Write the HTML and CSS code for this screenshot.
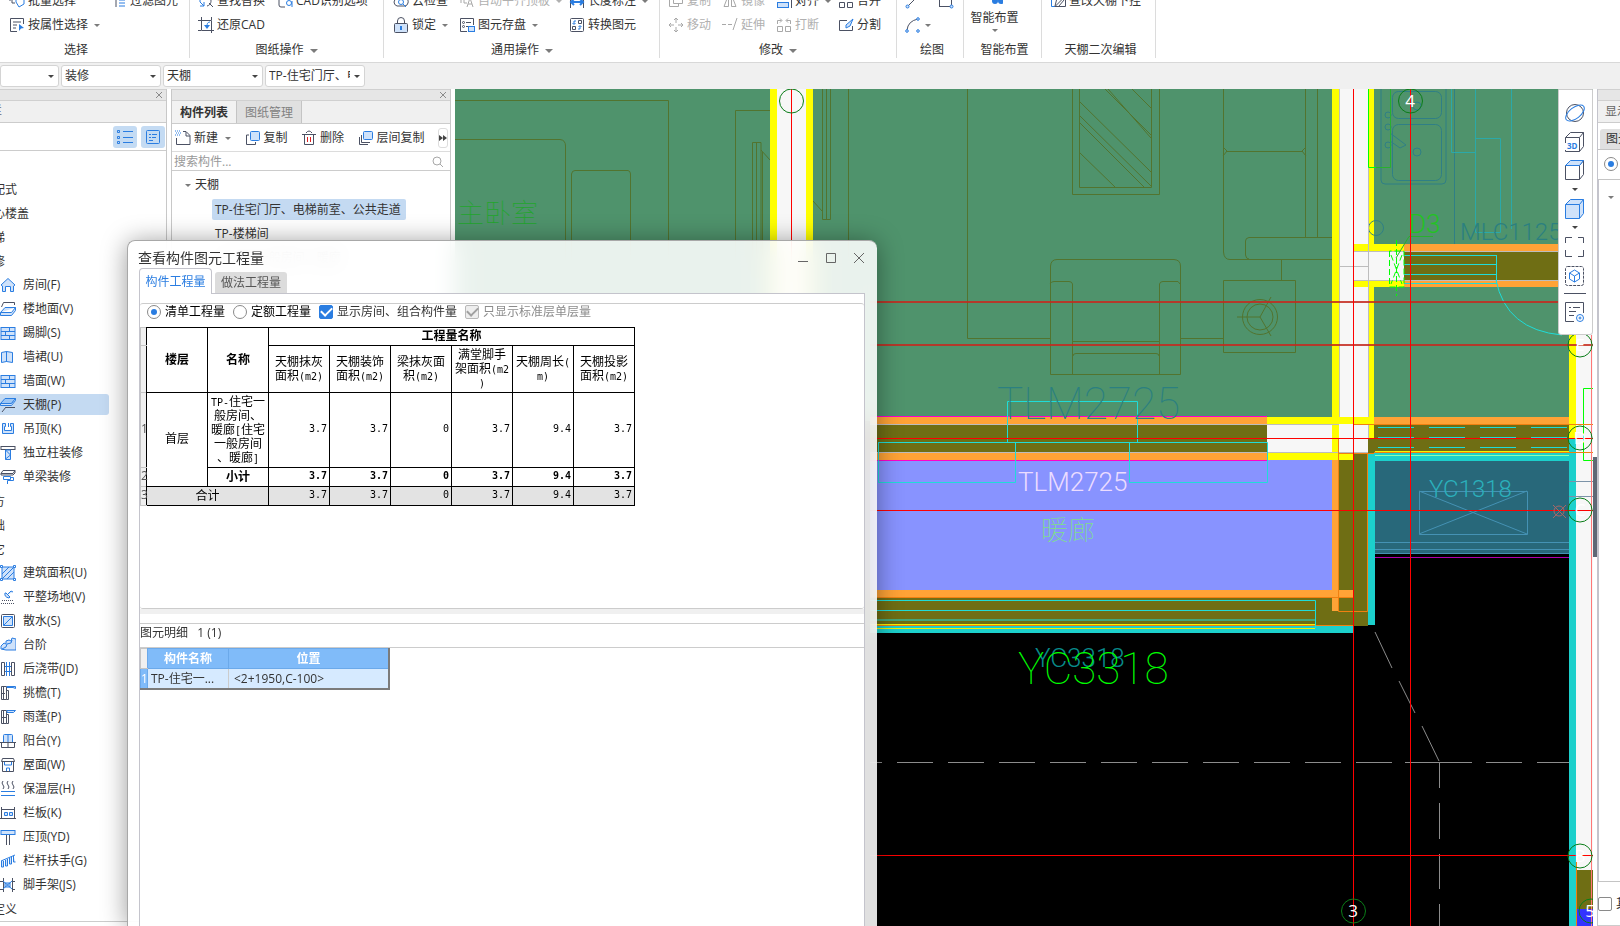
FILE: index.html
```html
<!DOCTYPE html>
<html lang="zh-CN">
<head>
<meta charset="utf-8">
<title>查看构件图元工程量</title>
<link rel="stylesheet" href="styles.css">
</head>
<body>
<div class="app">

<header class="ribbon">
  <section class="group g-select">
    <div class="tools">
      <button class="tool"><svg class="ico" viewBox="0 0 16 16"><path class="d" d="M3 1v9h3M1 3v5"/><path class="b" d="M7 3v6l3 5 5-3 0-6"/></svg>批量选择</button>
      <button class="tool"><svg class="ico" viewBox="0 0 16 16"><path class="d" d="M5 1v13"/><path class="b" d="M8 4h6M8 7h6M8 10h6M8 13h6"/></svg>过滤图元</button>
      <button class="tool"><svg class="ico" viewBox="0 0 16 16"><path class="d" d="M14.500 7V1.500H1.500v13H8M4 5h8M4 8h4M4 11h3"/><path class="bs" d="M10 7l5 4-3 .5-2 2.500z"/></svg>按属性选择<i class="caret"></i></button>
    </div>
    <h2 class="caption">选择</h2>
  </section>
  <section class="group g-drawing">
    <div class="tools">
      <button class="tool"><svg class="ico" viewBox="0 0 16 16"><path class="b" d="M2 5v4l4 4M2 13h4v-4"/><path class="d" d="M9 13c4-1 5-5 3-9M11 10l4 4"/></svg>查找替换</button>
      <button class="tool"><svg class="ico" viewBox="0 0 16 16"><path class="d" d="M2 1v11q0 2 2 2h4M14 1v5"/><circle class="b" cx="12" cy="10" r="2.500"/><path class="b" d="M15 8v6"/></svg>CAD识别选项</button>
      <button class="tool"><svg class="ico" viewBox="0 0 16 16"><path class="d" d="M3.500 0v13.500H16M0 3.500h13.500V16M0 13.500h3M13.500 0v3"/><path class="b" d="M12 5c-3 0-3 3-3 5"/><path class="bs" d="M6 8h6l-3 4z"/></svg>还原CAD</button>
    </div>
    <h2 class="caption">图纸操作<i class="caret"></i></h2>
  </section>
  <section class="group g-common">
    <div class="tools">
      <button class="tool"><svg class="ico" viewBox="0 0 16 16"><path class="d" d="M4 13q-3-1-3-4t4-4q3-4 7 0 4 1 3 5-1 3-3 3z"/><circle class="b" cx="8" cy="9" r="2.500"/><path class="b" d="M10 11l3 3"/></svg>云检查</button>
      <button class="tool off"><svg class="ico" viewBox="0 0 16 16"><path class="m" d="M2 4v6M5 4v6h3M8 14l3-9 3 9M9 11h4"/></svg>自动平齐顶板<i class="caret"></i></button>
      <button class="tool"><svg class="ico" viewBox="0 0 16 16"><path class="d" d="M1.500 2v13M14.500 2v13"/><path class="b2" d="M2 9h12M5 6L2 9l3 3M11 6l3 3-3 3"/></svg>长度标注<i class="caret"></i></button>
      <button class="tool"><svg class="ico" viewBox="0 0 16 16"><path class="d" d="M4.500 6V4a3.500 3.500 0 0 1 7 0v2"/><rect class="d f" x="1.500" y="6.500" width="13" height="9" rx="1"/><path class="b2" d="M8 9v4"/></svg>锁定<i class="caret"></i></button>
      <button class="tool"><svg class="ico" viewBox="0 0 16 16"><path class="d" d="M8 14.500H1.500v-13h13V8M7 5.500h5M7 9.500h2"/><circle class="d" cx="4.500" cy="5.500" r="1"/><circle class="d" cx="4.500" cy="9.500" r="1"/><rect class="b f" x="9.500" y="9.500" width="6" height="5"/></svg>图元存盘<i class="caret"></i></button>
      <button class="tool"><svg class="ico" viewBox="0 0 16 16"><rect class="d" x="1.500" y="1.500" width="13" height="13" rx="1"/><path class="d" d="M9.500 3.500h3v3h-3zM3.500 9.500h3v3h-3z"/><path class="b" d="M7 4H5v3M3.500 6L5 7.500 6.500 6M9 12h2V9M9.500 10L11 8.500 12.500 10"/></svg>转换图元</button>
    </div>
    <h2 class="caption">通用操作<i class="caret"></i></h2>
  </section>
  <section class="group g-modify">
    <div class="tools">
      <button class="tool off"><svg class="ico" viewBox="0 0 16 16"><path class="m" d="M5.500 1h9v9.500h-9zM4 5H1.500v8.500h9V11"/></svg>复制</button>
      <button class="tool off"><svg class="ico" viewBox="0 0 16 16"><path class="m" d="M6.500 2v11.500H2zM9.500 2v11.500H14z"/></svg>镜像</button>
      <button class="tool"><svg class="ico" viewBox="0 0 16 16"><path class="d" d="M15.500 0v15"/><rect class="b f" x="1.500" y="9.500" width="11" height="5"/></svg>对齐<i class="caret"></i></button>
      <button class="tool"><svg class="ico" viewBox="0 0 16 16"><path class="d" d="M1.500 9.500h5v5h-5zM9.500 9.500h5v5h-5zM2 5.500h12"/></svg>合并</button>
      <button class="tool off"><svg class="ico" viewBox="0 0 16 16"><path class="m" d="M8 1v5M8 10v5M1 8h5M10 8h5M6 3l2-2 2 2M6 13l2 2 2-2M3 6L1 8l2 2M13 6l2 2-2 2"/></svg>移动</button>
      <button class="tool off"><svg class="ico" viewBox="0 0 16 16"><path class="m" d="M0 7.500h4M6 7.500h4M11 13l4-12"/></svg>延伸</button>
      <button class="tool off"><svg class="ico" viewBox="0 0 16 16"><path class="m" d="M1.500 9.500h5v5h-5zM9.500 9.500h5v5h-5zM1.500 7V3.500h4M14.500 7V3.500h-4M4 1.500L6 3.500 4 5.500M12 1.500L10 3.500 12 5.500"/></svg>打断</button>
      <button class="tool"><svg class="ico" viewBox="0 0 16 16"><path class="d" d="M9 3.500H1.500v10h13V9"/><path class="b f" d="M15 2l-7 6v3l4-2z"/></svg>分割</button>
    </div>
    <h2 class="caption">修改<i class="caret"></i></h2>
  </section>
  <section class="group g-draw">
    <div class="tools">
      <button class="tool" aria-label="直线"><svg class="ico" viewBox="0 0 16 16"><path class="d" d="M3 13L14 2"/><circle class="b f" cx="2.500" cy="13.500" r="1.500"/></svg></button>
      <button class="tool" aria-label="矩形"><svg class="ico" viewBox="0 0 16 16"><rect class="d" x="1.500" y="2.500" width="12" height="11"/><circle class="b f" cx="13.500" cy="13.500" r="1.500"/></svg></button>
      <button class="tool" aria-label="弧线"><svg class="ico" viewBox="0 0 16 16"><path class="d" d="M2 13Q3 4 13 2"/><circle class="b f" cx="2" cy="14" r="1.300"/><circle class="b f" cx="13" cy="2" r="1.300"/><circle class="b f" cx="13" cy="14" r="1.300"/></svg><i class="caret near"></i></button>
    </div>
    <h2 class="caption">绘图</h2>
  </section>
  <section class="group g-smart">
    <button class="big"><svg class="ico" viewBox="0 0 16 16"><circle class="bs" cx="8" cy="11" r="3"/><circle class="bs" cx="14" cy="11" r="3"/></svg>智能布置<i class="caret"></i></button>
    <h2 class="caption">智能布置</h2>
  </section>
  <section class="group g-edit">
    <div class="tools">
      <button class="tool"><svg class="ico" viewBox="0 0 16 16"><path class="b" d="M4 3.500H1.500v10H5"/><path class="d" d="M5 13.500L15.500 3v10.500zM5 13l2-8M9 13l5-6"/></svg>查改天棚下挂</button>
    </div>
    <h2 class="caption">天棚二次编辑</h2>
  </section>
</header>

<nav class="pickers" aria-label="构件选择">
  <span class="pick first"><select aria-label="楼层"><option></option></select></span>
  <span class="pick"><select aria-label="构件类别"><option>装修</option></select></span>
  <span class="pick"><select aria-label="构件类型"><option>天棚</option></select></span>
  <span class="pick"><select aria-label="构件"><option>TP-住宅门厅、电梯前室、公共走道</option></select></span>
</nav>

<main class="work">
  <aside class="panel nav">
    <div class="grip"><button class="close" aria-label="关闭"><svg viewBox="0 0 8 8"><path d="M1 1l6 6M7 1L1 7"/></svg></button></div>
    <div class="navhead"><span>导航栏</span></div>
    <div class="navtools">
      <button aria-label="列表"><svg class="ico" viewBox="0 0 16 16"><path class="b" d="M6 2.500h10M6 8.500h10M6 13.500h10"/><path class="b" d="M.5 1.500h2v2h-2zM.5 7.500h2v2h-2zM.5 12.500h2v2h-2z"/></svg></button>
      <button aria-label="详情"><svg class="ico" viewBox="0 0 16 16"><rect class="b" x="1.500" y="1.500" width="13" height="13" rx="1"/><path class="b" d="M4 5.500h2M7 5.500h5M4 8.500h2M7 8.500h4M4 11.500h4"/></svg></button>
    </div>
    <ul class="tree">
      <li class="cat">装配式</li>
      <li class="cat">空心楼盖</li>
      <li class="cat">楼梯</li>
      <li class="cat">装修</li>
      <li><svg class="ico" viewBox="0 0 16 16"><path class="b f" d="M1 8l7-6.500L15 8l-1.500 1v5.500h-3v-5h-5v5h-3V9z"/></svg>房间(F)</li>
      <li><svg class="ico" viewBox="0 0 16 16"><path class="d" d="M1.500 6l2-4.500h11V4"/><path class="b f" d="M5 6.500h10.500l-4 5H.5zM.5 11.500v3h11l4-5v-3"/></svg>楼地面(V)</li>
      <li><svg class="ico" viewBox="0 0 16 16"><rect class="b f" x="1" y="2.500" width="14" height="12"/><path class="b" d="M1 6.500h14M1 10.500h14M9.500 2v4M5.500 6v4M9.500 10v4"/></svg>踢脚(S)</li>
      <li><svg class="ico" viewBox="0 0 16 16"><path class="b f" d="M1.500 3.500l5-1v10l-5 1zM6.500 2.500l6 1v10l-6-1z"/></svg>墙裙(U)</li>
      <li><svg class="ico" viewBox="0 0 16 16"><rect class="b f" x="1" y="2.500" width="14" height="12"/><path class="b" d="M1 6.500h14M1 10.500h14M9.500 2v4M5.500 6v4M9.500 10v4"/></svg>墙面(W)</li>
      <li class="on"><svg class="ico" viewBox="0 0 16 16"><path class="b f2" d="M5 1.500h10.500l-4 5H.5z"/><path class="b f" d="M.5 6.500v2h11l4-5v-2l-4 5z"/><path class="d" d="M2 15l4-5M6 10.500h9"/></svg>天棚(P)</li>
      <li><svg class="ico" viewBox="0 0 16 16"><path class="b f" d="M2.500 2.500h3v3h-1v4h7v-4h-1v-3h3v10h-11z"/><path class="b" d="M8.500 2v4"/></svg>吊顶(K)</li>
      <li><svg class="ico" viewBox="0 0 16 16"><rect class="d" x="1" y="1.500" width="14" height="3"/><path class="b f" d="M5.500 5h5v9.500h-5zM5.500 5l5 5-5 4"/></svg>独立柱装修</li>
      <li><svg class="ico" viewBox="0 0 16 16"><path class="d" d="M1 4.500l2-3h12l-2 3zM1 4.500V6h12l2-2V1.500"/><path class="b" d="M3.500 7.500h7v3h-7zM11 8.500h2.500v3h-6V15"/></svg>单梁装修</li>
      <li class="cat">土方</li>
      <li class="cat">基础</li>
      <li class="cat">其它</li>
      <li><svg class="ico" viewBox="0 0 16 16"><rect class="b f" x="2" y="2" width="12" height="12"/><path class="b" d="M2 9l7-7M2 14L14 2M7 14l7-7"/><path class="b w" d="M.5.5h2v2h-2zM13.500.5h2v2h-2zM.5 13.500h2v2h-2zM13.500 13.500h2v2h-2z"/></svg>建筑面积(U)</li>
      <li><svg class="ico" viewBox="0 0 16 16"><path class="b f" d="M5 4q-1 4 4 5l1-1-4-4zM7 6l4-4 2 1"/><path class="d dot" d="M2 11.500h12M1 14.500h14"/></svg>平整场地(V)</li>
      <li><svg class="ico" viewBox="0 0 16 16"><rect class="d" x="1.500" y="1.500" width="13" height="13" rx="1"/><path class="b f" d="M3.500 3.500h9v9h-9zM3.500 12.500l9-9"/></svg>散水(S)</li>
      <li><svg class="ico" viewBox="0 0 16 16"><path class="b f" d="M1 9l3-3 2 1V4l3-1 2 1 1-3 4 1v11H6l-5-1z"/><path class="b" d="M2 12l4-2 1-3 4-1 1-3"/></svg>台阶</li>
      <li><svg class="ico" viewBox="0 0 16 16"><path class="d" d="M1.500 1.500h3v13h-3zM11.500 1.500h3v13h-3z"/><path class="b" d="M6.500 1v14M9.500 1v14M5 5.500h6M5 10.500h6"/></svg>后浇带(JD)</li>
      <li><svg class="ico" viewBox="0 0 16 16"><path class="d" d="M1.500 1.500h5v13h-5zM3.500 1v14M2 8.500h3M6.500 5.500h2v9h-2"/><path class="b f" d="M7 1.500h8.500v2L13 2.500H7z"/></svg>挑檐(T)</li>
      <li><svg class="ico" viewBox="0 0 16 16"><path class="d" d="M1.500 1.500h5v13h-5zM3.500 1v14M2 8.500h5M6.500 5.500h2v9h-2"/><path class="b f" d="M7 1.500h8.500l-2 2H7z"/></svg>雨蓬(P)</li>
      <li><svg class="ico" viewBox="0 0 16 16"><path class="b f" d="M3.500 9V2.500q0-1 1-1h7q1 0 1 1V9M8 1.500V9"/><path class="d" d="M0 9.500h16M1.500 9.500v5h13v-5M8 9.500v5"/></svg>阳台(Y)</li>
      <li><svg class="ico" viewBox="0 0 16 16"><path class="d" d="M2.500 1.500h11l1 3h-13zM2.500 5v9.500h11V5"/><path class="b" d="M4.500 5v3h7V5M6.500 14v-3h3v3"/></svg>屋面(W)</li>
      <li><svg class="ico" viewBox="0 0 16 16"><path class="d" d="M3 0q-2 2 0 4t0 4M8 0q-2 2 0 4t0 4M13 0q-2 2 0 4t0 4"/><path class="b" d="M1 10.500h14M1 14.500h14"/></svg>保温层(H)</li>
      <li><svg class="ico" viewBox="0 0 16 16"><path class="d" d="M1.500 2v11M14.500 2v11M2 4.500h12M0 13.500h16"/><path class="b f" d="M4.500 7.500h3v3h-3zM9.500 7.500h3v3h-3z"/></svg>栏板(K)</li>
      <li><svg class="ico" viewBox="0 0 16 16"><rect class="b f" x="1" y="1.500" width="14" height="4"/><path class="d" d="M6.500 6v10M9.500 6v10"/></svg>压顶(YD)</li>
      <li><svg class="ico" viewBox="0 0 16 16"><path class="b f" d="M1 8l14-6M1.500 8v6h2V8M5.500 7v6h2V6M9.500 5v6h2V4M13.500 3v6h2"/></svg>栏杆扶手(G)</li>
      <li><svg class="ico" viewBox="0 0 16 16"><path class="d" d="M3.500 1v14M12.500 1v14M0 4.500h3M12 4.500h3M0 12.500h3M12 12.500h3"/><path class="b f" d="M3 4l9 8M3 12l9-8M5 6h5v4H5z"/></svg>脚手架(JS)</li>
      <li class="cat">自定义</li>
    </ul>
  </aside>

  <section class="panel comp">
    <div class="grip"><button class="close" aria-label="关闭"><svg viewBox="0 0 8 8"><path d="M1 1l6 6M7 1L1 7"/></svg></button></div>
    <div class="tabs"><button class="tab on">构件列表</button><button class="tab">图纸管理</button></div>
    <div class="comptools">
      <button><svg class="ico" viewBox="0 0 16 16"><path class="d" d="M8 1.500h3l4 4v9H1.500V8M11 2v4h4"/><path class="b dot" d="M0 1h6M1 3h5M0 5h6"/></svg>新建<i class="caret"></i></button>
      <button><svg class="ico" viewBox="0 0 16 16"><path class="d" d="M4 5H1.500v9.500h9V12"/><rect class="b f" x="5.500" y="1.500" width="9" height="9" rx="1"/></svg>复制</button>
      <button><svg class="ico" viewBox="0 0 16 16"><path class="d" d="M5 3q3-4 6 0M1 4.500h14M3.500 4.500v10h9v-10"/><path class="r" d="M6.500 7v5M9.500 7v5"/></svg>删除</button>
      <button><svg class="ico" viewBox="0 0 16 16"><path class="d" d="M1.500 7v7.500H10M3.500 5v7.500H12"/><rect class="b f" x="5.500" y="1.500" width="9" height="8" rx="1"/></svg>层间复制</button>
      <button class="more" aria-label="更多"><svg viewBox="0 0 8 8"><path d="M0 1l4 3-4 3zM4 1l4 3-4 3z"/></svg></button>
    </div>
    <div class="search"><input type="text" placeholder="搜索构件..." aria-label="搜索构件"><svg class="ico" viewBox="0 0 16 16"><circle class="m" cx="7" cy="8" r="4"/><path class="m" d="M10 11l3 3"/></svg></div>
    <ul class="list">
      <li class="root"><i class="caret"></i>天棚</li>
      <li><span class="on">TP-住宅门厅、电梯前室、公共走道</span></li>
      <li><span>TP-楼梯间</span></li>
      <li><span>TP-住宅一般房间、暖廊</span></li>
    </ul>
  </section>

  <section class="canvas" aria-label="绘图区">
    <svg class="cad"><g transform="translate(-455 -89)">
      <rect class="black" x="455" y="89" width="1200" height="1200"/>
      <rect class="green" x="455" y="89" width="1140" height="332"/>
      <g class="furn">
        <path d="M455 100.500H668.500V260M455 139.500H560Q565.500 140 565.500 146V260M571.500 260V174Q572 170.500 575 170.500H628Q630.500 171 630.500 174V260M735.500 260V110.500H778M752.500 260V142.500H761V260M756.500 142V260M761 150L770 160M762.500 152V260"/>
        <path d="M813 201L822 211M822.500 89V219.500H830.500V89M826.500 89V219M848.500 89V300M967.500 89V338.500H1050M1181 338.500H1223"/>
        <path d="M1072.500 89V194.500H1159.500V89M1079.500 89V187.500H1151.500V89M1105 89L1151 135M1108 89L1151 138M1132 89L1151 108M1079 101L1151 172M1079 115L1151 186M1079 122L1144 187M1079 152L1115 187"/>
        <path d="M1223.500 89V252Q1224 259.500 1230 259.500H1339M1305.500 89V237M1317.500 89V237M1226 151.500H1303M1339 237.500H1249Q1245.500 238 1245.500 241V255Q1246 259 1249 259M1223 147L1227 151 1223 156M1306 147L1302 151 1306 156M1281.500 259V280"/>
        <path d="M1223.500 280.500H1295.500V352.500H1223.500zM1237 317H1260L1271 297M1260 317L1271 336"/><circle cx="1260" cy="317" r="17.500"/><circle cx="1260" cy="317" r="13"/>
        <path d="M1050.500 374.500V266Q1051 259.500 1057 259.500H1174Q1180.500 260 1180.500 266V374.500zM1050 284Q1051 281.500 1054 281.500H1069Q1072 281.500 1072.500 284V374M1159.500 374V284Q1160 281.500 1163 281.500H1178L1180 284M1073 341.500H1159M1073 356Q1073 353.500 1076 353.500H1156Q1159 353.500 1159 356"/>
      </g>
      <g class="kitchen">
        <rect x="1381" y="80" width="65" height="104" rx="4"/><rect x="1392.500" y="91.500" width="49" height="27" rx="6"/><rect x="1392.500" y="124.500" width="49" height="56" rx="6"/>
        <circle cx="1388" cy="115" r="3"/><circle cx="1388" cy="127" r="3"/><circle cx="1388" cy="145" r="3"/><circle cx="1417" cy="152" r="4"/><circle cx="1417" cy="106" r="4"/>
        <path d="M1390 133L1406 145 1400 148 1390 141M1454.500 89V251"/>
        <path class="aqua" d="M1451.500 89V152.500H1475M1475.500 89V232.500H1500.500V138.500H1475M1511.500 89V229"/>
      </g>
      <rect class="white" x="777" y="89" width="29" height="300"/><rect class="yellow" x="770" y="89" width="7" height="300"/><rect class="yellow" x="806" y="89" width="7" height="300"/>
      <path class="red" d="M791.500 89V300"/><circle class="mark" cx="791.500" cy="101" r="12"/>
      <rect class="white" x="1339" y="89" width="29" height="364"/>
      <rect class="yellow" x="1332" y="89" width="7" height="371"/><rect class="yellow" x="1368" y="89" width="6" height="349"/>
      <rect class="yellow" x="1353" y="244" width="51" height="43"/><rect class="white" x="1353" y="251" width="51" height="29"/>
      <rect class="orange" x="1404" y="244" width="189" height="43"/><rect class="olive" x="1404" y="251" width="189" height="29"/>
      <circle class="kitchen" cx="1376" cy="228" r="7.500"/>
      <path class="grey" d="M1353 251.500H1593M1353 280.500H1593M1339 266.500H1368M1339.500 89V453M1368.500 89V438"/>
      <path class="cyanline" d="M1404 255.500H1496M1404 264.500H1496M1404 274.500H1496M1404 283.500H1496M1496.500 255V284M1496 280Q1506 330 1562 335"/>
      <path class="lime" d="M1368.500 89V167.500H1376"/><path class="leader" d="M1376 167.500H1390.500V89"/>
      <path class="lime dash" d="M1389.500 251V287H1404V251zM1391 255L1402 284M1402 255L1391 284M1396.500 240V296"/>
      <path class="leader" d="M1396 258L1409 236.500H1433"/>

      <rect class="orange" x="870" y="417" width="397" height="43"/><rect class="olive" x="870" y="425" width="397" height="28"/>
      <rect class="yellow" x="1267" y="417" width="107" height="7"/><rect class="white" x="1267" y="424" width="65" height="29"/><rect class="white" x="1339" y="424" width="29" height="29"/><rect class="yellow" x="1267" y="453" width="86" height="7"/>
      <rect class="blue" x="870" y="460" width="463" height="130"/>
      <rect class="olive" x="870" y="597" width="498" height="29"/><rect class="olive" x="1339" y="453" width="29" height="173"/><rect class="olive" x="1368" y="438" width="7" height="15"/>
      <rect class="yellow" x="1332" y="453" width="21" height="7"/>
      <rect class="orange" x="1332" y="460" width="7" height="151"/><rect class="orange" x="870" y="590" width="483" height="7"/>
      <rect class="cyan" x="870" y="626" width="483" height="7"/><rect class="cyan" x="1368" y="453" width="7" height="172"/>
      <path class="magenta" d="M870 416.500H1267M870 460.500H1267"/><path class="grey" d="M870 424.500H1339M870 452.500H1368"/>
      <path class="amber" d="M1338.500 439V611.500H1367.500V453M1339 453.500H1374M870 597.500H1353M870 625.500H1353"/>
      <path class="cyanline" d="M1007.500 442V401.500H1137.500V442M878 442.500H1267.500V482.500H1129.500V442M1015.500 442V482.500H878.500V442M870 600.500H1315.500V628M870 610.500H1315M870 620H1315"/>
      <path class="yline" d="M870 624.500H1315M870 628.500H1315"/>

      <rect class="orange" x="1374" y="417" width="195" height="7"/><rect class="olive" x="1374" y="424" width="195" height="29"/><rect class="cyan" x="1374" y="453" width="195" height="8"/>
      <path class="cyanline long" d="M1378 427.500H1569M1378 437.500H1569M1378 447.500H1569"/><path class="yline" d="M1375 451.500H1569"/><path class="pale" d="M1375 455.500H1569"/>
      <rect class="teal" x="1375" y="461" width="194" height="93"/>
      <path class="steel" d="M1419.500 491.500H1527.500V534.500H1419.500zM1419 491L1527 534M1419 534L1527 491M1375 542.500H1569M1375 549.500H1569M1375 553.500H1569"/>
      <path class="purple" d="M1375 557.500H1569"/>
      <rect class="yellow" x="1569" y="300" width="7" height="138"/><rect class="cyan" x="1569" y="438" width="7" height="900"/><rect class="white" x="1576" y="287" width="17" height="583"/>
      <rect class="olive" x="1576" y="870" width="17" height="39"/><rect class="navy" x="1576" y="909" width="17" height="300"/>
      <path class="lime" d="M1593 388.500H1583.500V460.500H1593"/><path class="slate" d="M1593 481.500H1569M1593 496.500H1569"/>
      <path class="amber" d="M1354 424.500H1593M1374 452.500H1593M1576.500 860V926"/>
      <g class="haze">
        <path d="M1375 632L1392 668M1399 681L1415 713M1422 726L1439 761M1405 762.500H1472M1486 762.500H1522M1537 762.500H1569M1356 762.500H1392M1305 762.500H1341M1254 762.500H1290M1203 762.500H1239M1152 762.500H1188M1101 762.500H1137M1050 762.500H1086M999 762.500H1035M948 762.500H984M897 762.500H933M870 762.500H882M1439.500 763V788M1439.500 803V839M1439.500 854V889M1439.500 904V940"/>
      </g>
      <path class="red thick" d="M870 302H1559M870 345H1593"/>
      <path class="red" d="M870 438.500H1593M870 510.500H1593M870 855.500H1593M1353.500 89V926M1410.500 89V926"/>
      <path class="pink" d="M1591.500 335V926"/><path class="pinkmark" d="M1553 505L1566 518M1566 505L1553 518"/><circle class="pinkmark" cx="1559" cy="511" r="5"/>
      <g class="mark"><circle cx="1410.500" cy="101" r="12"/><circle cx="1580" cy="345" r="12"/><circle cx="1580" cy="438" r="12"/><circle cx="1580" cy="510" r="12"/><circle cx="1580" cy="856" r="12"/><circle cx="1353.500" cy="911" r="12"/><circle cx="1591" cy="911" r="12"/></g>
      <g class="axis"><text x="1410" y="107">4</text><text x="1580" y="351">E</text><text x="1580" y="444">D</text><text x="1580" y="516">C</text><text x="1580" y="862">B</text><text x="1353" y="917">3</text><text x="1590" y="917">5</text></g>
      <g class="cadtext">
        <text class="t-green han" x="457" y="223">主卧室</text>
        <text class="t-teal big" x="997" y="419">TLM2725</text>
        <text class="t-teal slim" x="1460" y="240">MLC1125</text>
        <text class="t-lime" x="1409" y="233">D3</text>
        <text class="t-lilac" x="1018" y="491">TLM2725</text>
        <text class="t-mint han" x="1041" y="540">暖廊</text>
        <text class="t-deep" x="1035" y="667">YC3318</text>
        <text class="t-bright big" x="1018" y="684">YC3318</text>
        <text class="t-aqua slim" x="1429" y="497">YC1318</text>
      </g>
    </g></svg>
    <div class="viewbar">
      <button aria-label="动态观察"><svg class="vico" viewBox="0 0 22 22"><circle class="d" cx="11" cy="11" r="8.500"/><ellipse class="b" cx="11" cy="11" rx="11" ry="5.500" transform="rotate(-38 11 11)"/></svg></button>
      <button aria-label="三维"><svg class="vico" viewBox="0 0 22 22"><path class="d" d="M1.500 12V6.500l5-5h13v14l-4 5H1.500V19M1.500 6.500h14v14M15.500 6.500l4-5"/><text class="v3d" x="3" y="18">3D</text></svg></button>
      <button aria-label="俯视"><svg class="vico" viewBox="0 0 22 22"><path class="d" d="M1.500 6.500v14h14l4-5v-14l-4 5zM15.500 6.500v14"/><path class="b f" d="M1.500 6.500l5-5h13l-4 5z"/></svg></button>
      <i class="caret"></i>
      <button aria-label="着色"><svg class="vico" viewBox="0 0 22 22"><path class="b f" d="M1.500 6.500l5-5h13v14l-4 5H1.500zM1.500 6.500h14v14M15.500 6.500l4-5"/></svg></button>
      <i class="caret"></i>
      <button aria-label="全屏"><svg class="vico" viewBox="0 0 22 22"><path class="d" d="M1.500 7V1.500H8M14 1.500h5.500V7M19.500 14v6.500H14M8 20.500H1.500V14"/></svg></button>
      <button aria-label="局部三维"><svg class="vico" viewBox="0 0 22 22"><rect class="d dsh" x="1.500" y="1.500" width="18" height="19" rx="2"/><path class="b" d="M10.500 5l5 3v6l-5 3-5-3V8zM5.500 8l5 3 5-3M10.500 11v6"/></svg></button>
      <hr>
      <button aria-label="显示设置"><svg class="vico" viewBox="0 0 22 22"><path class="d" d="M10 20.500H1.500v-19h18V12M5 6.500h2M9 6.500h7M5 10.500h7M5 14.500h5"/><circle class="b" cx="16" cy="17" r="3.500"/><circle class="b" cx="16" cy="17" r="1"/></svg></button>
    </div>
  </section>

  <div class="splitter"><i></i></div>

  <aside class="panel props">
    <div class="grip"></div>
    <div class="propshead">显示设置</div>
    <div class="propstabs"><button>图元显示</button></div>
    <div class="propsradio"><input type="radio" name="scope" checked aria-label="显示范围"></div>
    <div class="propsbody"><i class="caret"></i></div>
    <div class="propsfoot"><input type="checkbox" id="other"><label for="other">其他</label></div>
  </aside>
</main>

<section class="dialog" role="dialog" aria-labelledby="dlg-title">
  <div class="titlebar">
    <h1 id="dlg-title">查看构件图元工程量</h1>
    <div class="winbtns">
      <button aria-label="最小化"><svg viewBox="0 0 12 12"><path d="M1 9.500h10"/></svg></button>
      <button aria-label="最大化"><svg viewBox="0 0 12 12"><path d="M1.500 1.500h9v9h-9z"/></svg></button>
      <button aria-label="关闭"><svg viewBox="0 0 12 12"><path d="M1 1l10 10M11 1L1 11"/></svg></button>
    </div>
  </div>
  <div class="dlgtabs"><button class="on">构件工程量</button><button>做法工程量</button></div>
  <div class="sheet">
    <div class="upper">
      <div class="opts">
        <label class="strong"><input type="radio" name="kind" checked>清单工程量</label>
        <label class="strong"><input type="radio" name="kind">定额工程量</label>
        <label><input type="checkbox" checked>显示房间、组合构件量</label>
        <label class="off"><input type="checkbox" checked disabled>只显示标准层单层量</label>
      </div>
      <table class="qty">
        <tr class="r-top"><th class="no"></th><th rowspan="2">楼层</th><th rowspan="2">名称</th><th colspan="6">工程量名称</th></tr>
        <tr class="r-head"><th class="no"></th><td>天棚抹灰<br>面积<span>(m2)</span></td><td>天棚装饰<br>面积<span>(m2)</span></td><td>梁抹灰面<br>积<span>(m2)</span></td><td>满堂脚手<br>架面积<span>(m2</span><br><span>)</span></td><td>天棚周长<span>(</span><br><span>m)</span></td><td>天棚投影<br>面积<span>(m2)</span></td></tr>
        <tr class="r-body"><th class="no">1</th><td rowspan="2">首层</td><td><span>TP-</span>住宅一<br>般房间、<br>暖廊<span>[</span>住宅<br>一般房间<br>、暖廊<span>]</span></td><td class="n">3.7</td><td class="n">3.7</td><td class="n">0</td><td class="n">3.7</td><td class="n">9.4</td><td class="n">3.7</td></tr>
        <tr class="r-sum"><th class="no">2</th><th>小计</th><th class="n">3.7</th><th class="n">3.7</th><th class="n">0</th><th class="n">3.7</th><th class="n">9.4</th><th class="n">3.7</th></tr>
        <tr class="r-sum total"><th class="no">3</th><td colspan="2">合计</td><td class="n">3.7</td><td class="n">3.7</td><td class="n">0</td><td class="n">3.7</td><td class="n">9.4</td><td class="n">3.7</td></tr>
      </table>
    </div>
    <div class="divider"></div>
    <div class="lower">
      <h2>图元明细&nbsp;&nbsp; 1 (1)</h2>
      <table class="detail">
        <tr><th class="no"></th><th class="c1">构件名称</th><th class="c2">位置</th></tr>
        <tr><th class="no cur">1</th><td>TP-住宅一...</td><td>&lt;2+1950,C-100&gt;</td></tr>
      </table>
    </div>
  </div>
</section>
</div>
</body>
</html>
```

FILE: styles.css
```css
* { box-sizing: border-box; }
body { margin: 0; font: 12px/16px "Open Sans", "Noto Sans CJK SC", sans-serif; color: #333; background: #fff; overflow: hidden; }
button { font: inherit; color: inherit; background: none; border: 0; padding: 0; margin: 0; }
h1, h2 { margin: 0; font-weight: 400; font-size: 12px; }
ul { list-style: none; margin: 0; padding: 0; }
.app { position: relative; height: 100vh; display: flex; flex-direction: column; overflow: hidden; }

.ico { width: 16px; height: 16px; flex: none; }
.d, .b, .b2, .m, .r { fill: none; stroke-width: 1; }
.d { stroke: #4b5163; }
.b, .b2 { stroke: #2a7de1; }
.b2 { stroke-width: 2; }
.m { stroke: #a8a8a8; }
.r { stroke: #e02020; }
.bs { fill: #2a7de1; }
.f { fill: #cfe2fa; }
.f2 { fill: #9cc6f5; }
.w { fill: #fff; }
.dot { stroke-dasharray: 1 1; }
.dsh { stroke-dasharray: 3 1; }
.caret { display: inline-block; flex: none; width: 0; height: 0; border: 4px solid transparent; border-top: 4px solid #7b7b7b; border-bottom: 0; margin-left: 6px; }

.ribbon { height: 63px; flex: none; display: flex; background: #fff; border-bottom: 1px solid #d8d8d8; overflow: hidden; }
.group { flex: none; display: flex; flex-direction: column; justify-content: flex-end; align-items: stretch; height: 58px; position: relative; border-right: 1px solid #dcdcdc; }
.tools { display: grid; grid-auto-rows: 24px; align-items: center; padding-bottom: 5px; }
.tool { display: flex; align-items: center; gap: 3px; white-space: nowrap; }
.tool .caret { margin-left: 3px; border-width: 3px; border-bottom: 0; }
.tool .near { margin-left: 1px; }
.off { color: #b0b0b0; }
.off .caret { border-top-color: #b0b0b0; }
.caption { text-align: center; height: 16px; white-space: nowrap; padding-right: 8px; }
.caption .caret { vertical-align: middle; }
.g-select { width: 190px; padding-left: 9px; }
.g-select .tools { grid-template-columns: 102px auto; }
.g-select .caption { padding-right: 46px; }
.g-drawing { width: 194px; padding-left: 8px; }
.g-drawing .tools { grid-template-columns: 79px auto; }
.g-common { width: 276px; padding-left: 9px; }
.g-common .tools { grid-template-columns: 66px 110px auto; }
.g-modify { width: 237px; padding-left: 8px; }
.g-modify .tools { grid-template-columns: 54px 54px 62px auto; }
.g-draw { width: 67px; padding-left: 8px; }
.g-draw .tools { grid-template-columns: 33px auto; }
.g-draw .caption { padding-right: 4px; }
.g-smart { width: 78px; }
.g-smart .big { display: flex; flex-direction: column; align-items: center; gap: 4px; padding-right: 16px; padding-bottom: 10px; line-height: 15px; }
.g-smart .big .caret { margin: 0; border-width: 3px; border-bottom: 0; }
.g-smart .caption { padding: 0 0 0 4px; }
.g-edit { width: 114px; padding-left: 8px; }
.g-edit .tools { padding-bottom: 29px; }
.g-edit .caption { padding-right: 4px; }

.pickers { height: 26px; flex: none; display: flex; gap: 2px; align-items: center; background: #f0f0f0; }
.pick { position: relative; width: 100px; height: 22px; }
.pick.first { width: 59px; }
.pick select { appearance: none; width: 100%; height: 22px; border: 1px solid #d4d4d4; border-radius: 3px; background: #fff; padding: 0 14px 0 3px; font: inherit; color: #333; overflow: hidden; }
.pick::after { content: ""; position: absolute; right: 5px; top: 10px; border: 3px solid transparent; border-top: 3px solid #444; border-bottom: 0; }

.work { flex: 1; min-height: 0; display: flex; }
.panel { display: flex; flex-direction: column; background: #fff; border-right: 1px solid #c8c8c8; overflow: hidden; flex: none; }
.grip { height: 12px; flex: none; background: #e6e6e6; border-top: 1px solid #d0d0d0; border-bottom: 1px solid #d0d0d0; display: flex; justify-content: flex-end; align-items: center; }
.close { width: 8px; height: 8px; margin-right: 3px; }
.close svg { display: block; width: 8px; height: 8px; stroke: #8a8a8a; fill: none; }

.nav { width: 167px; margin-right: 4px; }
.navhead { height: 22px; flex: none; background: #f0f0f0; border-bottom: 1px solid #ccc; color: #667; line-height: 20px; display: flex; }
.navhead span { margin-left: -34px; }
.navtools { height: 28px; flex: none; border-bottom: 1px solid #ccc; display: flex; justify-content: flex-end; align-items: center; gap: 4px; padding-right: 1px; }
.navtools button { width: 24px; height: 22px; border-radius: 3px; background: #c4dbf3; display: flex; align-items: center; justify-content: center; }
.tree { padding-top: 26px; border-bottom: 1px solid #ccc; }
.tree li { height: 24px; display: flex; align-items: center; gap: 7px; white-space: nowrap; }
.tree .cat { margin-left: -19px; padding-top: 1px; }
.tree .on { height: 21px; margin: 1px 57px 2px 0; background: #c4daf2; border-radius: 0 3px 3px 0; }

.comp { width: 280px; border-left: 1px solid #c8c8c8; margin-right: 4px; }
.tabs { height: 23px; flex: none; display: flex; background: #f0f0f0; border-bottom: 1px solid #ccc; }
.tab { width: 65px; border-right: 1px solid #c4c4c4; background: #e0e0e0; color: #808080; padding-top: 2px; }
.tab.on { background: #f2f2f2; color: #333; font-weight: 700; }
.comptools { height: 28px; flex: none; border-bottom: 1px solid #dcdcdc; display: flex; align-items: center; justify-content: space-between; padding: 1px 2px 0 3px; }
.comptools button { display: flex; align-items: center; gap: 3px; white-space: nowrap; }
.comptools .caret { margin-left: 4px; border-width: 3px; border-bottom: 0; }
.comptools .more { width: 10px; height: 20px; border: 1px solid #ddd; border-radius: 3px; justify-content: center; }
.more svg { width: 8px; height: 8px; fill: #444; flex: none; }
.search { height: 19px; flex: none; border-bottom: 1px solid #ccc; display: flex; align-items: center; padding: 0 4px 0 2px; }
.search input { flex: 1; min-width: 0; border: 0; padding: 1px 0 0; font: inherit; outline: 0; }
.search input::placeholder { color: #999; opacity: 1; }
.list { padding-top: 2px; }
.list li { height: 24px; display: flex; align-items: center; padding-left: 40px; white-space: nowrap; }
.list .root { padding-left: 13px; gap: 3px; }
.list .root .caret { margin: 0 1px 0 0; border-width: 3px; border-bottom: 0; }
.list span { height: 21px; line-height: 21px; padding: 0 5px 0 3px; border-radius: 2px; }
.list .on { background: #c4daf2; }

.canvas { flex: 1; min-width: 0; position: relative; background: #000; overflow: hidden; }
.cad { display: block; width: 100%; height: 100%; }
.cad path, .kitchen, .furn, .mark { fill: none; }
.black { fill: #000; } .green { fill: #4f936c; } .white { fill: #f7f7f7; } .yellow { fill: #ff0; }
.orange { fill: #ffa336; } .olive { fill: #6f6e14; } .blue { fill: #8893ff; } .cyan { fill: #1cd0cc; }
.teal { fill: #28687a; } .navy { fill: #33f; }
.furn { stroke: #52742f; }
.kitchen { stroke: #2f7f86; } .aqua { stroke: #2ba9a9; }
.red { stroke: #f00; } .cad .thick { stroke: #c4291f; stroke-width: 2; opacity: .85; }
.grey { stroke: #bdbdbd; } .cyanline { stroke: #1fdcd8; } .long { stroke-dasharray: 36 15; }
.lime { stroke: #0f0; } .dash { stroke-dasharray: 6 3; } .leader { stroke: #28b02e; }
.magenta { stroke: #f0c; } .purple { stroke: #b000b0; } .amber { stroke: #f08010; } .yline { stroke: #f4f400; } .pale { stroke: #8dffb0; }
.steel { stroke: #4592b4; } .slate { stroke: #7c93a8; } .haze { stroke: #8c8c8c; }
.pink { stroke: #f77; } .pinkmark { fill: none; stroke: #a66; }
.mark { stroke: #0a7d18; }
.axis text { font: 17px "Open Sans", sans-serif; fill: #fff; text-anchor: middle; }
.cadtext text { font: 300 26px Roboto, "Noto Sans CJK SC", sans-serif; }
.cadtext .slim { font-size: 24px; }
.cadtext .big { font-size: 44px; font-weight: 100; }
.cadtext .han { font-size: 27px; font-weight: 100; }
.t-green { fill: #22a52c; } .t-teal { fill: #2b8080; } .t-lime { fill: #22c322; } .t-lilac { fill: #ecdcff; }
.t-mint { fill: #7fe08a; } .t-deep { fill: #088a8a; } .t-bright { fill: #0f0; } .t-aqua { fill: #2bb0bc; }

.viewbar { position: absolute; top: 0; right: 0; width: 35px; height: 246px; background: #fff; border: 1px solid #ccc; border-radius: 0 0 3px 3px; display: flex; flex-direction: column; align-items: center; justify-content: space-between; padding: 12px 2px 11px 0; }
.viewbar button { height: 22px; }
.vico { width: 22px; height: 22px; display: block; }
.v3d { font: 700 8px "Open Sans", sans-serif; fill: #2a7de1; }
.viewbar .caret { margin: 0; border-width: 3px; border-top-color: #444; border-bottom: 0; }
.viewbar hr { width: 22px; margin: 0; border: 0; border-top: 1px solid #4b5163; }

.splitter { width: 4px; flex: none; background: #fff; display: flex; flex-direction: column; }
.splitter i { margin-top: 368px; height: 100px; background: #5f6875; }

.props { width: 23px; border-right: 0; border-left: 1px solid #c4c4cc; white-space: nowrap; }
.propshead { height: 22px; flex: none; background: #f0f0f0; border-bottom: 1px solid #ccc; padding-left: 7px; line-height: 22px; color: #666; }
.propstabs { height: 27px; flex: none; border-bottom: 1px solid #c4c4c4; padding: 6px 0 0 2px; }
.propstabs button { height: 20px; background: #e0e0e0; padding-left: 6px; border-radius: 3px 0 0 0; }
.propsradio { height: 30px; flex: none; border-bottom: 1px solid #c4c4c4; padding: 7px 0 0 6px; }
.propsbody { flex: 1; border-left: 1px solid #c4c4cc; padding: 13px 0 0 9px; line-height: 4px; }
.propsbody .caret { margin: 0; border-width: 3px; border-bottom: 0; }
.propsfoot { height: 45px; flex: none; border-top: 1px solid #c4c4c4; border-bottom: 1px solid #ccc; display: flex; align-items: center; gap: 4px; }

input[type=radio], input[type=checkbox] { appearance: none; flex: none; width: 14px; height: 14px; margin: 0; border: 1px solid #8a8a8a; background: #fff; display: grid; place-items: center; }
input[type=radio] { border-radius: 50%; }
input[type=checkbox] { border-radius: 2px; }
input[type=radio]:checked::after { content: ""; width: 6px; height: 6px; border-radius: 50%; background: #2a7de1; }
input[type=checkbox]:checked { background: #2a7de1; border-color: #2a7de1; }
input[type=checkbox]:checked::after { content: ""; width: 9px; height: 5px; border: solid #fff; border-width: 0 0 2px 2px; transform: rotate(-45deg); margin-bottom: 3px; }
input[type=checkbox]:disabled { background: #eee; border-color: #b8b8b8; }
input[type=checkbox]:disabled::after { border-color: #a0a0a0; }

.dialog { position: absolute; left: 127px; top: 240px; bottom: 0; width: 750px; padding: 0 12px 0 11px; border: 1px solid #a8a8a8; border-width: 1px 0 0 1px; border-radius: 8px 8px 0 0; background: rgba(255, 255, 255, .88); backdrop-filter: blur(12px); box-shadow: 0 2px 26px rgba(0, 0, 0, .4); display: flex; flex-direction: column; }
.titlebar { display: flex; justify-content: space-between; align-items: center; height: 27px; padding-top: 7px; }
.titlebar h1 { font-size: 14px; line-height: 20px; margin-left: -1px; }
.winbtns { display: flex; gap: 16px; }
.winbtns button { width: 12px; height: 12px; }
.winbtns svg { display: block; width: 12px; height: 12px; fill: none; stroke: #666; }
.dlgtabs { display: flex; gap: 3px; align-items: flex-end; height: 25px; flex: none; }
.dlgtabs button { width: 72px; height: 21px; background: #dcdcdc; border-radius: 3px 3px 0 0; color: #555; }
.dlgtabs .on { width: 73px; height: 26px; margin-bottom: -1px; position: relative; background: #fff; border: 1px solid #c4c4cc; border-bottom: 0; color: #2a7de1; border-radius: 4px 4px 0 0; }
.sheet { flex: 1; min-height: 0; background: #fff; border: 1px solid #c4c4cc; border-bottom: 0; padding-top: 9px; display: flex; flex-direction: column; }
.upper { height: 306px; flex: none; border-top: 1px solid #ccc; border-bottom: 1px solid #ccc; border-radius: 3px; }
.opts { display: flex; gap: 8px; height: 16px; margin: 0 0 7px 7px; }
.opts label { display: flex; align-items: center; gap: 4px; }
.opts .strong { color: #000; }
.opts .off { color: #8c8c8c; }
.qty { border-collapse: collapse; table-layout: fixed; width: 495px; color: #000; font: 12px/14px "Noto Sans CJK SC", sans-serif; text-align: center; }
.qty td, .qty th { border: 1px solid #000; padding: 0 0 3px; white-space: nowrap; }
.qty span, .qty .n { font-family: "DejaVu Sans Mono", monospace; font-size: 10px; line-height: 10px; }
.qty .n { text-align: right; padding-right: 2px; }
.qty .no { width: 6px; }
.qty .no, .detail .no { background: #f0f0f0; border-color: #c4c4c4; border-right-color: #000; font: 12px/14px "Open Sans", sans-serif; color: #555; }
.r-top { height: 18px; } .r-head { height: 47px; } .r-body { height: 75px; } .r-sum { height: 19px; }
.total td { background: #e3e3e3; }
.divider { height: 5px; flex: none; background: #f0f0f0; }
.lower { margin-top: 9px; border-top: 1px solid #ccc; }
.lower h2 { line-height: 17px; height: 24px; border-bottom: 1px solid #ccc; }
.detail { border-collapse: collapse; table-layout: fixed; width: 250px; border-right: 2px solid #7b7b7b; border-bottom: 2px solid #7b7b7b; }
.detail tr { height: 20px; }
.detail th { background: #80bbf9; border: 1px solid #6ba9ea; color: #fff; padding: 0; line-height: 18px; font-weight: 700; }
.detail td { background: #d6eaff; border-right: 1px solid #ccc; padding: 1px 3px 0; line-height: 18px; }
.detail td:last-child { padding-left: 5px; border-right: 0; }
.detail .no { width: 7px; border-right-color: #6ba9ea; }
.detail .cur { background: #80bbf9; color: #fff; border-color: #6ba9ea; }
.detail .c1 { width: 81px; }
```
